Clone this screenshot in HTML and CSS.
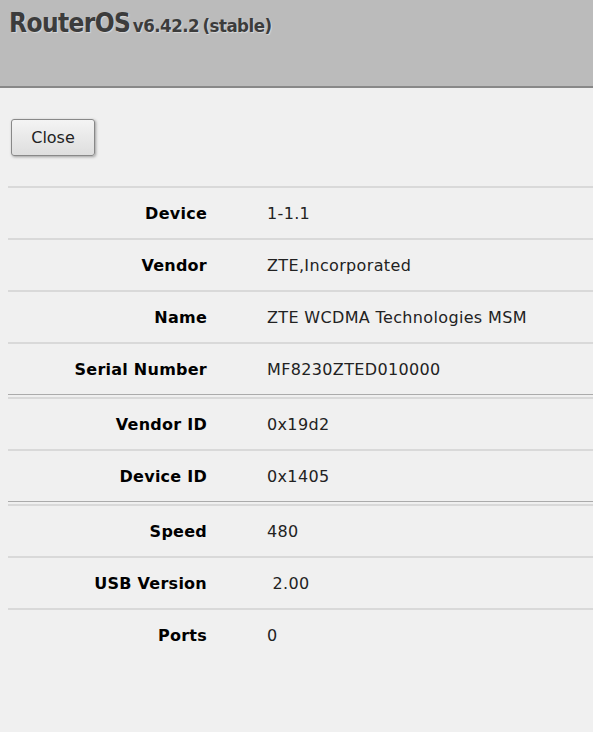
FILE: index.html
```html
<!DOCTYPE html>
<html>
<head>
    <meta charset="UTF-8">
    <title>RouterOS</title>
    <link rel="stylesheet" href="styles.css">
</head>
<body>
    <div class="header">
        <h1>RouterOS <span class="version">v6.42.2 (stable)</span></h1>
    </div>

    <div class="content">
        <button class="close">Close</button>

        <div class="props">
            <div class="group">
                <div class="row"><div class="label">Device</div><div class="value">1-1.1</div></div>
                <div class="row"><div class="label">Vendor</div><div class="value">ZTE,Incorporated</div></div>
                <div class="row"><div class="label">Name</div><div class="value">ZTE WCDMA Technologies MSM</div></div>
                <div class="row"><div class="label">Serial Number</div><div class="value">MF8230ZTED010000</div></div>
            </div>
            <div class="group">
                <div class="row"><div class="label">Vendor ID</div><div class="value">0x19d2</div></div>
                <div class="row"><div class="label">Device ID</div><div class="value">0x1405</div></div>
            </div>
            <div class="group">
                <div class="row"><div class="label">Speed</div><div class="value">480</div></div>
                <div class="row"><div class="label">USB Version</div><div class="value">&nbsp;2.00</div></div>
                <div class="row"><div class="label">Ports</div><div class="value">0</div></div>
            </div>
        </div>
    </div>
</body>
</html>
```

FILE: styles.css
```css
body {
    margin: 0;
    font-family: "DejaVu Sans", Verdana, sans-serif;
    background-color: #f0f0f0;
    color: #222;
}

.header {
    height: 86px;
    background-color: #bbbbbb;
    border-bottom: 2px solid #888;
}

.header h1 {
    margin: 0;
    padding: 8px 0 0 9px;
    font-family: "DejaVu Sans Condensed", "DejaVu Sans", sans-serif;
    font-size: 26px;
    font-weight: bold;
    color: #3c3c3c;
    text-shadow: 1px 1px 1px #d8d8d8;
    letter-spacing: -0.6px;
    word-spacing: -5px;
}

.version {
    font-size: 18.5px;
    letter-spacing: -0.5px;
    word-spacing: -2px;
}

.content {
    padding: 31px 0 0 8px;
}

.close {
    margin-left: 3px;
    width: 84px;
    height: 37px;
    font-family: "DejaVu Sans", Verdana, sans-serif;
    font-size: 16px;
    color: #222;
    border: 1px solid #888;
    border-radius: 3px;
    background: linear-gradient(#f4f4f4, #dedede);
    box-shadow: 1px 1px 3px rgba(0,0,0,0.35);
    cursor: pointer;
}

.props {
    margin-top: 30px;
}

.group + .group {
    border-top: 1px solid #ababab;
    padding-top: 2px;
}

.row {
    display: flex;
    align-items: center;
    height: 50px;
    border-top: 2px solid #d9d9d9;
    font-size: 16px;
}

.label {
    width: 199px;
    text-align: right;
    font-weight: bold;
    color: #000;
    letter-spacing: 0.25px;
}

.value {
    padding-left: 60px;
    letter-spacing: 0.35px;
}
```
